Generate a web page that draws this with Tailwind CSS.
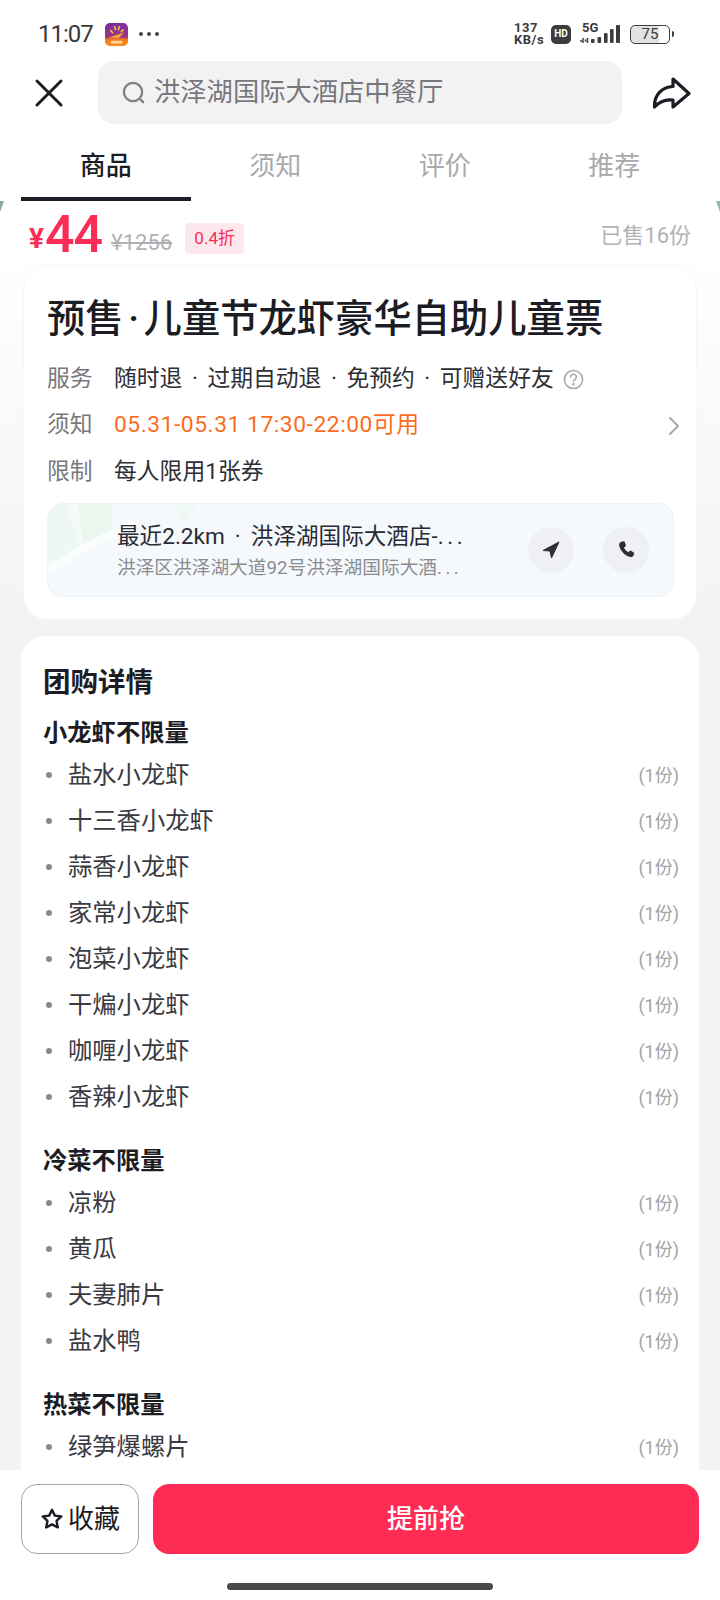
<!DOCTYPE html>
<html lang="zh-CN">
<head>
<meta charset="utf-8">
<script src="https://cdn.jsdelivr.net/npm/@tailwindcss/browser@4"></script>
</head>
<body class="m-0 bg-white">
<div class="relative flex h-[1600px] w-[720px] flex-col overflow-hidden bg-white font-['Roboto','Noto_Sans_CJK_SC',sans-serif] text-[#1c1c24]">

  <!-- status bar -->
  <div class="flex h-[61px] shrink-0 items-center pl-[38px] pr-[46px] pt-[7px]">
    <span class="text-[24px] leading-none tracking-[-1px] text-[#3a3a3a]">11:07</span>
    <svg class="ml-[12px]" width="23" height="23" viewBox="0 0 24 24">
      <defs><linearGradient id="lg" x1="0" y1="0" x2="0" y2="1"><stop offset="0" stop-color="#7a2f9c"/><stop offset=".62" stop-color="#a1367c"/><stop offset=".7" stop-color="#f5761d"/><stop offset="1" stop-color="#f9901f"/></linearGradient></defs>
      <rect width="24" height="24" rx="5" fill="url(#lg)"/>
      <path d="M6 8l2 2M10 4l1 3M15 4l-1 3M19 7l-2 2" stroke="#f6c14b" stroke-width="1.6" stroke-linecap="round"/>
      <path d="M4 15l16-5-6 6z" fill="#f0a63a"/>
      <rect x="6" y="18.5" width="12" height="3" rx="1" fill="#ffd9a0"/>
    </svg>
    <span class="ml-[11px] flex gap-[4px]"><i class="size-[4px] rounded-full bg-[#444]"></i><i class="size-[4px] rounded-full bg-[#444]"></i><i class="size-[4px] rounded-full bg-[#444]"></i></span>
    <div class="ml-auto flex items-center">
      <div class="w-[31px] whitespace-nowrap text-[13px] font-bold leading-[12px] tracking-[0.5px] text-[#3a3a3a]"><div class="h-[12px]">137</div><div class="h-[12px]">KB/s</div></div>
      <div class="ml-[6px] flex h-[19px] w-[20px] items-center justify-center rounded-[5px] bg-[#3c3c3c] text-[10px] font-bold leading-none text-white">HD</div>
      <div class="ml-[9px] h-[20px] w-[42px]">
        <svg width="42" height="20" viewBox="0 0 42 20" fill="#3c3c3c">
          <path d="M3 14v5M5.500 15.500v2M1 16v2M7.500 14v5" stroke="#3c3c3c" stroke-width="1.500" fill="none"/>
          <rect x="11" y="15" width="3.600" height="4" rx="1"/><rect x="17.500" y="13" width="3.600" height="6" rx="1"/><rect x="24" y="9" width="3.600" height="10" rx="1"/><rect x="30" y="5" width="3.600" height="14" rx="1"/><rect x="36" y="1" width="4" height="18" rx="1"/>
        </svg>
      </div>
      <div class="ml-[8px] flex h-[19px] w-[40px] items-center justify-center rounded-[5px] border-[1.5px] border-[#3c3c3c] bg-[linear-gradient(90deg,#e2e2e2_75%,#fff_75%)] text-[15px] leading-none text-[#3a3a3a]">75</div>
      <i class="ml-[2px] h-[6px] w-[2px] rounded-r bg-[#3c3c3c]"></i>
    </div>
  </div>

  <!-- 5G tag over the signal bars -->
  <span class="absolute left-[582px] top-[21px] text-[13px] font-bold leading-[14px] text-[#3a3a3a]">5G</span>

  <!-- nav -->
  <div class="flex h-[63px] shrink-0 items-center">
    <div class="flex w-[98px] justify-start pl-[33px]">
      <svg width="32" height="32" viewBox="0 0 32 32" fill="none" stroke="#1c1c24" stroke-width="3" stroke-linecap="round"><path d="M4 4l24 24M28 4L4 28"/></svg>
    </div>
    <div class="flex h-[63px] w-[524px] items-center rounded-[16px] bg-[#f2f2f3] pl-[23px]">
      <svg width="25" height="25" viewBox="0 0 26 26" fill="none" stroke="#7f7f85" stroke-width="2.400" stroke-linecap="round"><circle cx="12.500" cy="12.500" r="9.500"/><path d="M20 20l3 3"/></svg>
      <span class="ml-[8px] text-[26.300px] leading-none text-[#77777d]">洪泽湖国际大酒店中餐厅</span>
    </div>
    <div class="flex flex-1 justify-end pr-[29px]">
      <svg width="40" height="34" viewBox="0 0 40 34" fill="none" stroke="#1c1c24" stroke-width="3.200" stroke-linejoin="round" stroke-linecap="round"><path d="M22 3l16 14.500L22 31v-7C14 23 8 26 3.500 31 3 19 11 11 22 10.500z"/></svg>
    </div>
  </div>

  <!-- tabs -->
  <div class="flex h-[77px] shrink-0 px-[21px] text-[26px] text-[#a9a9ad]">
    <div class="flex h-full w-[170px] items-center justify-center border-b-[4px] border-[#1c1c24] pt-[12px] font-medium text-[#1c1c24]">商品</div>
    <div class="flex h-full w-[170px] items-center justify-center pb-[4px] pt-[12px]">须知</div>
    <div class="flex h-full w-[170px] items-center justify-center pb-[4px] pt-[12px]">评价</div>
    <div class="flex h-full w-[170px] items-center justify-center pb-[4px] pt-[12px]">推荐</div>
  </div>

  <!-- content -->
  <div class="relative min-h-0 flex-1 overflow-hidden bg-[linear-gradient(180deg,#ffffff_0,#ffffff_40px,#f3f3f3_420px)]">
    <svg class="absolute left-0 top-0" width="4" height="11" viewBox="0 0 4 11"><path d="M0 0h4L0 11z" fill="#8fa8a0"/></svg>
    <svg class="absolute right-0 top-0" width="4" height="11" viewBox="0 0 4 11"><path d="M0 0h4v11z" fill="#8fb8a8"/></svg>

    <!-- price row -->
    <div class="flex h-[64px] items-center pl-[29px] pr-[29px]">
      <span class="mt-[11px] text-[28px] font-bold leading-none text-[#fb2c56]">¥</span>
      <span class="ml-[1px] mt-[3px] text-[52px] font-medium leading-none tracking-[-1px] text-[#fb2c56]">44</span>
      <span class="ml-[9px] mt-[19px] text-[22px] leading-none text-[#b0b0b4] line-through">¥1256</span>
      <span class="ml-[13px] mt-[11px] flex h-[31px] w-[59px] items-center justify-center rounded-[4px] bg-[#fde9ed] text-[17px] leading-none text-[#f42f58]">0.4折</span>
      <span class="ml-auto mt-[6px] text-[22px] leading-none text-[#b3b3b7]">已售16份</span>
    </div>

    <!-- info card -->
    <div class="ml-[23px] h-[355px] w-[674px] rounded-[24px] border border-[#f6f6f6] bg-white px-[23px] pt-[27px]">
      <div class="flex h-[52px] items-center whitespace-nowrap text-[38.300px] font-medium leading-[52px]"><span>预售</span><span class="w-[20px] text-center">·</span><span>儿童节龙虾豪华自助儿童票</span></div>
      <div class="mt-[11px] flex h-[46px] items-center text-[22.800px]">
        <span class="w-[67px] text-[#77777d]">服务</span>
        <span class="text-[#2e2e36]">随时退</span><span class="w-[25px] text-center text-[#2e2e36]">·</span><span class="text-[#2e2e36]">过期自动退</span><span class="w-[25px] text-center text-[#2e2e36]">·</span><span class="text-[#2e2e36]">免预约</span><span class="w-[25px] text-center text-[#2e2e36]">·</span><span class="text-[#2e2e36]">可赠送好友</span>
        <svg class="ml-[9px]" width="21" height="21" viewBox="0 0 22 22" fill="none" stroke="#a8a8ac" stroke-width="1.600"><circle cx="11" cy="11" r="9.500"/><path d="M8 8.500c0-4 6-4 6 0 0 2.500-3 2.500-3 4.500" stroke-linecap="round"/><circle cx="11" cy="16" r=".6" fill="#a8a8ac"/></svg>
      </div>
      <div class="flex h-[47px] items-center text-[22.800px]">
        <span class="w-[67px] text-[#77777d]">须知</span>
        <span class="tracking-[0.55px] text-[#fa6d1f]">05.31-05.31 17:30-22:00可用</span>
        <svg class="ml-auto mr-[-7px]" width="12" height="20" viewBox="0 0 12 20" fill="none" stroke="#a8a8ac" stroke-width="2" stroke-linecap="round" stroke-linejoin="round"><path d="M2 2l8 8-8 8"/></svg>
      </div>
      <div class="flex h-[46px] items-center text-[22.800px]">
        <span class="w-[67px] text-[#77777d]">限制</span>
        <span class="text-[#2e2e36]">每人限用1张券</span>
      </div>
      <!-- store card -->
      <div class="relative mt-[8px] flex h-[94px] w-[627px] items-center overflow-hidden rounded-[16px] border border-[#edf2f6] bg-[#f5f9fc] pl-[69px] pr-[24px]">
        <svg class="absolute left-0 top-0" width="170" height="94" viewBox="0 0 170 94">
          <path d="M0 0h19l13 44L0 66z" fill="#eef8f3"/>
          <path d="M30 0h34v28L36 44z" fill="#e9f7ef"/>
          <path d="M126 0h24l-16 20z" fill="#eff8f5"/>
          <path d="M0 66L36 44 90 16" stroke="#fbfdfd" stroke-width="8" fill="none"/>
        </svg>
        <div class="relative min-w-0 flex-1 pt-[3px]">
          <div class="whitespace-nowrap text-[22.600px] leading-[32px] text-[#2a2a32]">最近2.2km<span class="inline-block w-[26px] text-center">·</span>洪泽湖国际大酒店-<span class="tracking-[3.500px]">...</span></div>
          <div class="whitespace-nowrap text-[18.700px] leading-[30px] text-[#8b8b92]">洪泽区洪泽湖大道92号洪泽湖国际大酒<span class="tracking-[3.500px]">...</span></div>
        </div>
        <div class="relative flex size-[46px] items-center justify-center rounded-full bg-[#eef0f3]">
          <svg width="20" height="20" viewBox="0 0 20 20" fill="#2e2e36" stroke="#2e2e36" stroke-width="1" stroke-linejoin="round"><path d="M18 2L2 10.500l7 .5 1.500 7z"/></svg>
        </div>
        <div class="relative ml-[29px] flex size-[46px] items-center justify-center rounded-full bg-[#eef0f3]">
          <svg width="20" height="20" viewBox="0 0 24 24" fill="#2e2e36"><path d="M6.600 2.200l2.300-.6c.7-.2 1.300.2 1.600.8l1.300 3.600c.2.600 0 1.300-.5 1.700L9.600 9c.8 2.300 2.700 4.500 5.100 5.700l1.600-1.500c.5-.5 1.200-.5 1.800-.2l3.100 2c.6.400.8 1.100.5 1.700l-1 2.100c-.5 1.200-1.800 2-3.200 1.700C10.500 19.200 4.900 13 3.800 6.400c-.2-1.900.8-3.700 2.800-4.200z"/></svg>
        </div>
      </div>
    </div>

    <!-- details card -->
    <div class="ml-[21px] mt-[16px] w-[678px] rounded-t-[24px] bg-white pl-[22px] pr-[20px] pt-[25px]">
      <div class="h-[44px] text-[27.500px] font-bold leading-[44px] text-[#1c1c24]">团购详情</div>
      <div class="mt-[9px] h-[38px] text-[24.300px] font-bold leading-[38px] text-[#1c1c24]">小龙虾不限量</div>
      <div class="flex h-[46px] items-center text-[24.300px] text-[#3a3a42]"><i class="ml-[3px] mr-[16px] size-[6px] rounded-full bg-[#8a8a8e]"></i>盐水小龙虾<span class="ml-auto text-[18px] text-[#a2a2a6]">(1份)</span></div>
      <div class="flex h-[46px] items-center text-[24.300px] text-[#3a3a42]"><i class="ml-[3px] mr-[16px] size-[6px] rounded-full bg-[#8a8a8e]"></i>十三香小龙虾<span class="ml-auto text-[18px] text-[#a2a2a6]">(1份)</span></div>
      <div class="flex h-[46px] items-center text-[24.300px] text-[#3a3a42]"><i class="ml-[3px] mr-[16px] size-[6px] rounded-full bg-[#8a8a8e]"></i>蒜香小龙虾<span class="ml-auto text-[18px] text-[#a2a2a6]">(1份)</span></div>
      <div class="flex h-[46px] items-center text-[24.300px] text-[#3a3a42]"><i class="ml-[3px] mr-[16px] size-[6px] rounded-full bg-[#8a8a8e]"></i>家常小龙虾<span class="ml-auto text-[18px] text-[#a2a2a6]">(1份)</span></div>
      <div class="flex h-[46px] items-center text-[24.300px] text-[#3a3a42]"><i class="ml-[3px] mr-[16px] size-[6px] rounded-full bg-[#8a8a8e]"></i>泡菜小龙虾<span class="ml-auto text-[18px] text-[#a2a2a6]">(1份)</span></div>
      <div class="flex h-[46px] items-center text-[24.300px] text-[#3a3a42]"><i class="ml-[3px] mr-[16px] size-[6px] rounded-full bg-[#8a8a8e]"></i>干煸小龙虾<span class="ml-auto text-[18px] text-[#a2a2a6]">(1份)</span></div>
      <div class="flex h-[46px] items-center text-[24.300px] text-[#3a3a42]"><i class="ml-[3px] mr-[16px] size-[6px] rounded-full bg-[#8a8a8e]"></i>咖喱小龙虾<span class="ml-auto text-[18px] text-[#a2a2a6]">(1份)</span></div>
      <div class="flex h-[46px] items-center text-[24.300px] text-[#3a3a42]"><i class="ml-[3px] mr-[16px] size-[6px] rounded-full bg-[#8a8a8e]"></i>香辣小龙虾<span class="ml-auto text-[18px] text-[#a2a2a6]">(1份)</span></div>
      <div class="mt-[22px] h-[38px] text-[24.300px] font-bold leading-[38px] text-[#1c1c24]">冷菜不限量</div>
      <div class="flex h-[46px] items-center text-[24.300px] text-[#3a3a42]"><i class="ml-[3px] mr-[16px] size-[6px] rounded-full bg-[#8a8a8e]"></i>凉粉<span class="ml-auto text-[18px] text-[#a2a2a6]">(1份)</span></div>
      <div class="flex h-[46px] items-center text-[24.300px] text-[#3a3a42]"><i class="ml-[3px] mr-[16px] size-[6px] rounded-full bg-[#8a8a8e]"></i>黄瓜<span class="ml-auto text-[18px] text-[#a2a2a6]">(1份)</span></div>
      <div class="flex h-[46px] items-center text-[24.300px] text-[#3a3a42]"><i class="ml-[3px] mr-[16px] size-[6px] rounded-full bg-[#8a8a8e]"></i>夫妻肺片<span class="ml-auto text-[18px] text-[#a2a2a6]">(1份)</span></div>
      <div class="flex h-[46px] items-center text-[24.300px] text-[#3a3a42]"><i class="ml-[3px] mr-[16px] size-[6px] rounded-full bg-[#8a8a8e]"></i>盐水鸭<span class="ml-auto text-[18px] text-[#a2a2a6]">(1份)</span></div>
      <div class="mt-[22px] h-[38px] text-[24.300px] font-bold leading-[38px] text-[#1c1c24]">热菜不限量</div>
      <div class="flex h-[46px] items-center text-[24.300px] text-[#3a3a42]"><i class="ml-[3px] mr-[16px] size-[6px] rounded-full bg-[#8a8a8e]"></i>绿笋爆螺片<span class="ml-auto text-[18px] text-[#a2a2a6]">(1份)</span></div>
    </div>
  </div>

  <!-- bottom bar -->
  <div class="relative h-[130px] shrink-0 bg-white px-[21px] pt-[14px]">
    <div class="flex h-[70px] gap-[14px]">
      <div class="flex h-full w-[118px] items-center justify-center rounded-[16px] border border-[#a8a8a8] text-[26px] text-[#1c1c24]">
        <svg class="mr-[4px]" width="24" height="24" viewBox="0 0 22 22" fill="none" stroke="#1c1c24" stroke-width="2.200" stroke-linejoin="round"><path d="M11 2.500l2.600 5.400 5.900.8-4.300 4.100 1.100 5.900L11 15.900l-5.300 2.800 1.100-5.900-4.300-4.100 5.900-.8z"/></svg>
        收藏
      </div>
      <div class="flex h-full flex-1 items-center justify-center rounded-[16px] bg-[#fe2c55] text-[26px] font-medium text-white">提前抢</div>
    </div>
    <div class="mx-auto mt-[29px] h-[7px] w-[266px] rounded-full bg-[#4a4a4a]"></div>
  </div>
</div>
</body>
</html>
